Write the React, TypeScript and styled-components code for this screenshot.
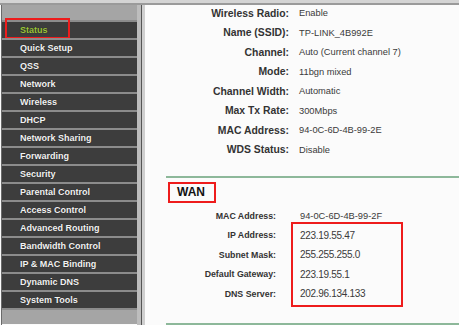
import React from "react";
import styled, { createGlobalStyle } from "styled-components";

const GlobalStyle = createGlobalStyle`
  html, body {
    margin: 0;
    padding: 0;
    background: #fbfbfb;
  }
  body {
    font-family: "Liberation Sans", Arial, sans-serif;
  }
`;

const MENU = [
  "Status",
  "Quick Setup",
  "QSS",
  "Network",
  "Wireless",
  "DHCP",
  "Network Sharing",
  "Forwarding",
  "Security",
  "Parental Control",
  "Access Control",
  "Advanced Routing",
  "Bandwidth Control",
  "IP & MAC Binding",
  "Dynamic DNS",
  "System Tools",
];

const WIRELESS = [
  ["Wireless Radio:", "Enable"],
  ["Name (SSID):", "TP-LINK_4B992E"],
  ["Channel:", "Auto (Current channel 7)"],
  ["Mode:", "11bgn mixed"],
  ["Channel Width:", "Automatic"],
  ["Max Tx Rate:", "300Mbps"],
  ["MAC Address:", "94-0C-6D-4B-99-2E"],
  ["WDS Status:", "Disable"],
];

const WAN = [
  ["MAC Address:", "94-0C-6D-4B-99-2F"],
  ["IP Address:", "223.19.55.47"],
  ["Subnet Mask:", "255.255.255.0"],
  ["Default Gateway:", "223.19.55.1"],
  ["DNS Server:", "202.96.134.133"],
];

export default function App() {
  return (
    <>
      <GlobalStyle />
      <Page>
        <TopBand />
        <Body>
          <Sidebar>
            <SideHeader />
            {MENU.map((item, i) => (
              <MenuItem key={item} $active={i === 0}>
                {item}
                {i === 0 && <StatusMark />}
              </MenuItem>
            ))}
            <SideFooter />
          </Sidebar>
          <Divider />
          <Content>
            <InfoGrid $labelWidth={144}>
              {WIRELESS.map(([label, value], i) => (
                <React.Fragment key={label}>
                  <Label $size={10.4} $row={i + 1}>{label}</Label>
                  <Value $row={i + 1}>{value}</Value>
                </React.Fragment>
              ))}
            </InfoGrid>
            <Section>
              <SectionTitle>WAN</SectionTitle>
              <InfoGrid $labelWidth={110} $wan>
                {WAN.map(([label, value], i) => (
                  <React.Fragment key={label}>
                    <Label $size={8.8} $row={i + 1}>{label}</Label>
                    <Value $row={i + 1} $big={i > 0}>{value}</Value>
                  </React.Fragment>
                ))}
                <Highlight />
              </InfoGrid>
            </Section>
          </Content>
        </Body>
      </Page>
    </>
  );
}

const Page = styled.div`
  width: 459px;
  height: 325px;
  overflow: hidden;
  display: flex;
  flex-direction: column;
  background: #fbfbfb;
`;

const TopBand = styled.div`
  height: 3px;
  background: #d4d4d4;
  border-bottom: 2px solid #9a9a9a;
  flex: none;
`;

const Body = styled.div`
  flex: 1;
  display: flex;
  min-height: 0;
`;

const Sidebar = styled.div`
  width: 135px;
  margin-left: 1px;
  border-left: 1px solid #6a6a6a;
  display: flex;
  flex-direction: column;
  background: #3d3d3d;
`;

const SideHeader = styled.div`
  height: 15px;
  background: #a5a5a5;
`;

const MenuItem = styled.div<{ $active?: boolean }>`
  position: relative;
  height: 16px;
  border-top: 2px solid #8c8c8c;
  background: #3d3d3d;
  padding-left: 18px;
  display: flex;
  align-items: center;
  font-size: 9px;
  font-weight: bold;
  color: ${(p) => (p.$active ? "#9cc43a" : "#f2f2f2")};
  text-shadow: 0 0 1px rgba(0, 0, 0, 0.6);
`;

const StatusMark = styled.span`
  position: absolute;
  left: 3px;
  top: -4px;
  width: 61px;
  height: 17px;
  border: 2px solid #ee1c1c;
`;

const SideFooter = styled.div`
  height: 14px;
  border-top: 2px solid #8c8c8c;
  background: #a5a5a5;
  border-bottom: 1px solid #fbfbfb;
`;

const Divider = styled.div`
  width: 4px;
  background: #bdbdbd;
  border-right: 1px solid #555;
  margin-right: 3px;
  box-shadow: 3px 0 0 #cfcfcf;
`;

const Content = styled.div`
  flex: 1;
  padding-top: 1px;
  display: flex;
  flex-direction: column;
  background: #fbfbfb;
`;

const InfoGrid = styled.div<{ $labelWidth: number; $wan?: boolean }>`
  display: grid;
  grid-template-columns: ${(p) => p.$labelWidth}px 1fr;
  grid-auto-rows: 14px;
  row-gap: 5.5px;
  column-gap: ${(p) => (p.$wan ? 24 : 10)}px;
  align-items: center;
`;

const Label = styled.div<{ $size: number; $row: number }>`
  grid-column: 1;
  grid-row: ${(p) => p.$row};
  text-align: right;
  font-weight: bold;
  font-size: ${(p) => p.$size}px;
  color: #333;
  white-space: nowrap;
`;

const Value = styled.div<{ $big?: boolean; $row: number }>`
  grid-column: 2;
  grid-row: ${(p) => p.$row};
  font-size: ${(p) => (p.$big ? 10 : 9.3)}px;
  letter-spacing: ${(p) => (p.$big ? -0.3 : 0)}px;
  color: #3a3a3a;
  white-space: nowrap;
`;

const Section = styled.div`
  margin-top: 19px;
  margin-left: 21px;
  border-top: 2px solid #8db89a;
  border-bottom: 2px solid #8db89a;
  padding-top: 4px;
  flex: 1;
`;

const SectionTitle = styled.div`
  display: inline-block;
  margin-left: 2px;
  box-sizing: border-box;
  width: 48px;
  height: 21px;
  border: 2px solid #ee1c1c;
  padding-left: 7px;
  line-height: 17px;
  font-size: 12px;
  font-weight: bold;
  color: #111;
  margin-bottom: 6px;
`;

const Highlight = styled.div`
  grid-column: 2;
  grid-row: 2 / 6;
  align-self: stretch;
  margin: -6px 0 -6px -9px;
  width: 112px;
  box-sizing: border-box;
  border: 2px solid #ee1c1c;
`;
